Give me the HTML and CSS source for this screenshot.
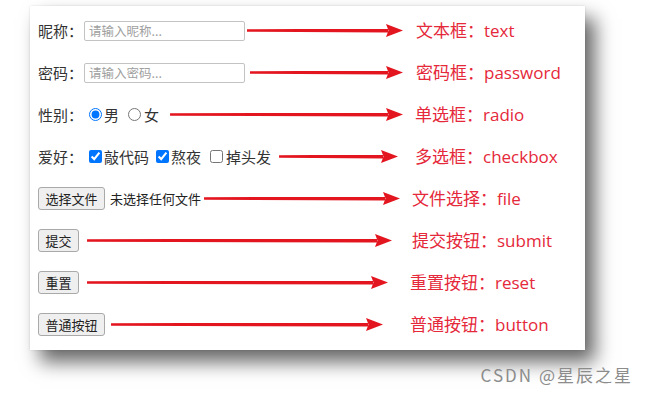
FILE: index.html
```html
<!DOCTYPE html>
<html lang="zh-CN">
<head>
<meta charset="utf-8">
<title>表单控件</title>
<link rel="stylesheet" href="styles.css">
</head>
<body>
<div class="card">
  <div class="row r1">
    <div class="lead">
      <span class="field-label">昵称：</span>
      <input class="txt" type="text" placeholder="请输入昵称...">
      <span class="arrow"><span class="shaft"></span><svg class="head" viewBox="0 0 17 13"><polygon points="0,0 17,6.5 0,13 2.5,6.5"/></svg></span>
    </div>
    <span class="tag">文本框：text</span>
  </div>
  <div class="row r2">
    <div class="lead">
      <span class="field-label">密码：</span>
      <input class="txt" type="password" placeholder="请输入密码...">
      <span class="arrow"><span class="shaft"></span><svg class="head" viewBox="0 0 17 13"><polygon points="0,0 17,6.5 0,13 2.5,6.5"/></svg></span>
    </div>
    <span class="tag">密码框：password</span>
  </div>
  <div class="row r3">
    <div class="lead">
      <span class="field-label">性别：</span>
      <label class="opt o-m"><input type="radio" name="sex" checked>男</label>
      <label class="opt o-f"><input type="radio" name="sex">女</label>
      <span class="arrow"><span class="shaft"></span><svg class="head" viewBox="0 0 17 13"><polygon points="0,0 17,6.5 0,13 2.5,6.5"/></svg></span>
    </div>
    <span class="tag">单选框：radio</span>
  </div>
  <div class="row r4">
    <div class="lead">
      <span class="field-label">爱好：</span>
      <label class="opt c1"><input type="checkbox" checked>敲代码</label>
      <label class="opt c2"><input type="checkbox" checked>熬夜</label>
      <label class="opt c3"><input type="checkbox">掉头发</label>
      <span class="arrow"><span class="shaft"></span><svg class="head" viewBox="0 0 17 13"><polygon points="0,0 17,6.5 0,13 2.5,6.5"/></svg></span>
    </div>
    <span class="tag">多选框：checkbox</span>
  </div>
  <div class="row r5">
    <div class="lead">
      <button class="btn" type="button">选择文件</button>
      <span class="file-name">未选择任何文件</span>
      <span class="arrow"><span class="shaft"></span><svg class="head" viewBox="0 0 17 13"><polygon points="0,0 17,6.5 0,13 2.5,6.5"/></svg></span>
    </div>
    <span class="tag">文件选择：file</span>
  </div>
  <div class="row r6">
    <div class="lead">
      <button class="btn" type="submit">提交</button>
      <span class="arrow"><span class="shaft"></span><svg class="head" viewBox="0 0 17 13"><polygon points="0,0 17,6.5 0,13 2.5,6.5"/></svg></span>
    </div>
    <span class="tag">提交按钮：submit</span>
  </div>
  <div class="row r7">
    <div class="lead">
      <button class="btn" type="reset">重置</button>
      <span class="arrow"><span class="shaft"></span><svg class="head" viewBox="0 0 17 13"><polygon points="0,0 17,6.5 0,13 2.5,6.5"/></svg></span>
    </div>
    <span class="tag">重置按钮：reset</span>
  </div>
  <div class="row r8">
    <div class="lead">
      <button class="btn" type="button">普通按钮</button>
      <span class="arrow"><span class="shaft"></span><svg class="head" viewBox="0 0 17 13"><polygon points="0,0 17,6.5 0,13 2.5,6.5"/></svg></span>
    </div>
    <span class="tag">普通按钮：button</span>
  </div>
</div>
<div class="mark">CSDN @星辰之星</div>
</body>
</html>
```
FILE: styles.css
```css
* { box-sizing: border-box; }
html, body { margin: 0; padding: 0; background: #fff; }
body {
  width: 646px;
  height: 394px;
  overflow: hidden;
  font-family: "Noto Sans CJK SC", "Noto Sans", sans-serif;
  color: #333;
}
.card {
  margin: 6px 0 0 30px;
  width: 555px;
  height: 344px;
  background: #fff;
  padding: 13px 0 0 8px;
  display: flex;
  flex-direction: column;
  gap: 19px;
  box-shadow: 0 0 2px rgba(0,0,0,0.12), 10px 12px 18px rgba(0,0,0,0.6);
}
.row {
  display: grid;
  grid-template-columns: 371px auto;
  align-items: center;
  height: 23px;
}
.lead {
  display: flex;
  align-items: center;
  height: 23px;
  min-width: 0;
}
.field-label {
  font-size: 15px;
  line-height: 1;
  width: 46px;
  flex: none;
  color: #333;
}
.txt {
  width: 161px;
  height: 20px;
  border: 1px solid #c3c3c3;
  border-radius: 2px;
  padding: 0 4px;
  margin: 0;
  font-family: "Noto Sans CJK SC", sans-serif;
  font-size: 12.5px;
  color: #333;
  background: #fff;
  outline: none;
}
.txt::placeholder { color: #a0a0a0; }
.opt {
  display: flex;
  align-items: center;
  font-size: 15px;
  line-height: 1;
  color: #333;
  flex: none;
}
.opt input {
  width: 13px;
  height: 13px;
  margin: 0 2px 0 0;
  flex: none;
}
.o-m { margin-left: 5px; }
.o-f { margin-left: 9px; }
.o-f input { margin-right: 3px; }
.c1 { margin-left: 5px; }
.c2 { margin-left: 7px; }
.c3 { margin-left: 9px; }
.c3 input { margin-right: 3px; }
.btn {
  display: inline-flex;
  align-items: center;
  justify-content: center;
  height: 23px;
  padding: 0 6.5px;
  margin: 0;
  border: 1px solid #a9a9a9;
  border-radius: 3px;
  background: #efefef;
  color: #222;
  font-family: "Noto Sans CJK SC", sans-serif;
  font-size: 13px;
  line-height: 1;
  flex: none;
}
.file-name {
  font-size: 13px;
  line-height: 1;
  color: #222;
  margin-left: 5px;
  flex: none;
}
.arrow {
  flex: 1;
  display: flex;
  align-items: center;
  height: 14px;
  margin-left: var(--al);
  margin-right: var(--ar);
  min-width: 0;
}
.shaft {
  flex: 1;
  height: 4px;
  background: #e3151f;
  clip-path: polygon(0 20%, 100% 0, 100% 100%, 0 80%);
  margin-right: -2px;
}
.head {
  width: 17px;
  height: 13px;
  flex: none;
  fill: #e3151f;
}
.tag {
  padding-left: var(--tl);
  font-family: "Open Sans", "Noto Sans CJK SC", sans-serif;
  font-size: 17px;
  line-height: 1;
  color: #e5283a;
  white-space: nowrap;
}
.r1 { --al: 2px; --ar: 6px; --tl: 7px; }
.r2 { --al: 5px; --ar: 6px; --tl: 7px; }
.r3 { --al: 11px; --ar: 6px; --tl: 6px; }
.r4 { --al: 8px; --ar: 11px; --tl: 6px; }
.r5 { --al: 3px; --ar: 9px; --tl: 3px; }
.r6 { --al: 8px; --ar: 17px; --tl: 3px; }
.r7 { --al: 8px; --ar: 21px; --tl: 1px; }
.r8 { --al: 6px; --ar: 26px; --tl: 1px; }
.mark {
  margin-top: 15px;
  padding-right: 13px;
  text-align: right;
  font-family: "Noto Sans CJK SC", "Noto Sans", sans-serif;
  font-size: 17px;
  letter-spacing: 2px;
  line-height: 20px;
  color: #8c8c8c;
}
```
